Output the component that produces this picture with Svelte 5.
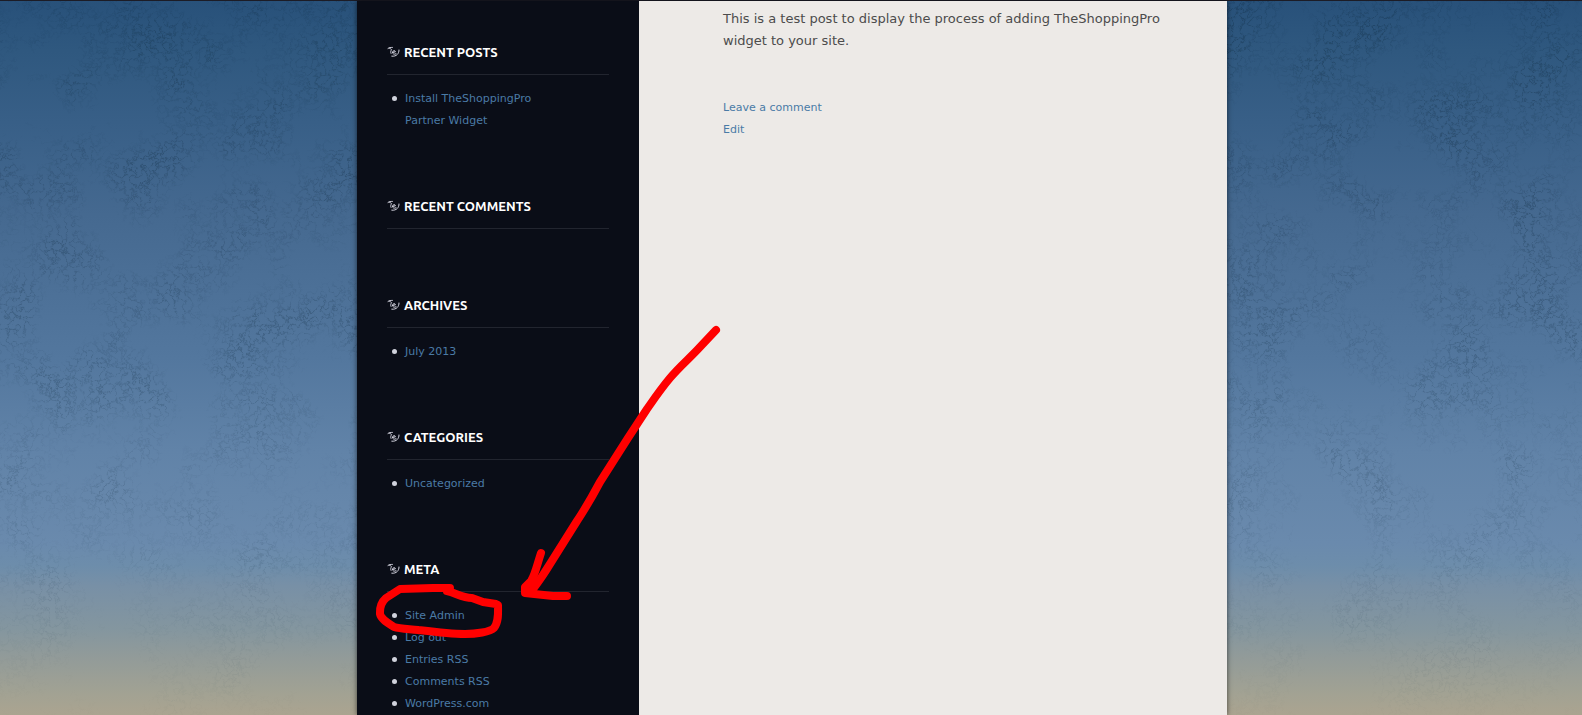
<script>
  const sections = [
    { title: 'Recent Posts', links: ['Install TheShoppingPro Partner Widget'] },
    { title: 'Recent Comments', links: [] },
    { title: 'Archives', links: ['July 2013'] },
    { title: 'Categories', links: ['Uncategorized'] },
    { title: 'Meta', links: ['Site Admin', 'Log out', 'Entries RSS', 'Comments RSS', 'WordPress.com'] }
  ];
</script>

<div class="page">
  <svg class="texture" aria-hidden="true">
    <defs>
      <filter id="grunge" x="0" y="0" width="100%" height="100%" color-interpolation-filters="sRGB">
        <feTurbulence type="fractalNoise" baseFrequency="0.12" numOctaves="5" seed="8" result="fine" />
        <feColorMatrix in="fine" type="matrix" values="0 0 0 0 0.06  0 0 0 0 0.16  0 0 0 0 0.24  1 0 0 0 0" result="field" />
        <feComponentTransfer in="field" result="cracks">
          <feFuncA type="table" tableValues="0 0 0 0 0 0 0 0 0 0.2 1 0.2 0 0 0 0 0 0 0 0 0" />
        </feComponentTransfer>
        <feTurbulence type="fractalNoise" baseFrequency="0.014" numOctaves="5" seed="21" result="coarse" />
        <feColorMatrix in="coarse" type="matrix" values="0 0 0 0 0  0 0 0 0 0  0 0 0 0 0  0 3 0 0 -1.2" result="patches" />
        <feComposite in="cracks" in2="patches" operator="in" />
      </filter>
      <linearGradient id="fade" x1="0" y1="0" x2="0" y2="1">
        <stop offset="0" stop-color="#fff" />
        <stop offset="0.6" stop-color="#aaa" />
        <stop offset="0.85" stop-color="#444" />
        <stop offset="1" stop-color="#111" />
      </linearGradient>
      <mask id="fade-mask"><rect width="100%" height="100%" fill="url(#fade)" /></mask>
    </defs>
    <g mask="url(#fade-mask)"><rect width="100%" height="100%" filter="url(#grunge)" opacity="0.32" /></g>
  </svg>

  <div class="wrapper">
    <aside>
      {#each sections as section}
        <section>
          <h2>
            <svg viewBox="0 0 13 12" width="13" height="12" aria-hidden="true">
              <path d="M1 2.5 C2.4 1.6 3.6 1.4 5.4 1.4 M2.2 2 C3 2.6 4.2 3 4.6 3.6 C3.8 4.8 3.4 6 4 7.4 M5.4 6.6 L8.4 5.8 C8.2 4.2 6 4.2 5.6 6 C5.3 8 7.2 8.8 9 7.8 M12 4 C12.2 7.4 9.6 10.8 4.8 10.2" />
            </svg>
            {section.title}
          </h2>
          {#if section.links.length}
            <ul>
              {#each section.links as link}
                <li><a href="#top">{link}</a></li>
              {/each}
            </ul>
          {/if}
        </section>
      {/each}
    </aside>

    <main>
      <p>This is a test post to display the process of adding TheShoppingPro widget to your site.</p>
      <footer>
        <a href="#comment">Leave a comment</a>
        <a href="#edit">Edit</a>
      </footer>
    </main>

    <svg class="marks" viewBox="357 0 870 715" width="870" height="715" aria-hidden="true">
      <path d="M716 330 L700 347 C690 358 680 366 670 378 C660 390 654 399 647 409 L628 438 L600 482 C592 497 585 509 577 521 L550 564 C544 574 539 581 533 589" />
      <path d="M541 553 C537 565 535 575 531 581 L525 587 L525 593 L553 596 L567 596" />
      <path d="M450 588 L433 588 L400 589 L386 598 C379 604 380 611 380 614 C381 619 388 623 394 627 C400 629 410 629 418 630 C434 632 449 634 465 634 C476 634 490 632 494 628 C499 622 498 612 498 605 L496 604 L483 602 L472 598 C462 598 456 593 447 591" />
    </svg>
  </div>
</div>

<style>
  :global(body) {
    margin: 0;
    background: #aca592;
  }

  .page {
    position: relative;
    box-sizing: border-box;
    min-height: 100vh;
    display: flex;
    justify-content: center;
    padding-left: 2px;
    border-top: 1px solid #1c1c26;
    background: linear-gradient(
      #28517a 0%,
      #2f587f 7%,
      #385f87 17%,
      #456990 30%,
      #53779e 50%,
      #6183a8 63%,
      #6a8aad 76%,
      #6d8dab 79%,
      #7890a6 82%,
      #84969f 88%,
      #929b99 92%,
      #a2a293 97%,
      #aba490 100%
    );
    font-family: Verdana, 'DejaVu Sans', sans-serif;
    font-size: 11px;
    line-height: 22px;
  }

  .texture {
    position: absolute;
    inset: 0;
    width: 100%;
    height: 100%;
  }

  .wrapper {
    position: relative;
    display: flex;
    width: 100%;
    max-width: 870px;
    background: #edeae7;
    box-shadow: 0 0 5px rgba(0, 0, 0, 0.6);
  }

  aside {
    box-sizing: border-box;
    flex: 0 0 282px;
    display: flex;
    flex-direction: column;
    gap: 52px;
    padding: 40px 30px 0;
    background: #0a0d17;
  }

  section {
    display: flow-root;
  }

  h2 {
    display: flex;
    align-items: center;
    gap: 4px;
    margin: 0 0 13px;
    padding-bottom: 11px;
    border-bottom: 1px solid #22252f;
    color: #fff;
    font-family: Ubuntu, 'Noto Sans', sans-serif;
    font-size: 13px;
    font-weight: 700;
    line-height: 22px;
    text-transform: uppercase;
  }

  h2 svg {
    flex: none;
    fill: none;
    stroke: #d4d4e0;
    stroke-linecap: round;
  }

  ul {
    margin: 0 0 11px;
    padding: 0;
    list-style: none;
  }

  section:last-child ul {
    margin-bottom: 0;
  }

  li {
    display: flex;
    padding-right: 50px;
  }

  li::before {
    content: '';
    flex: none;
    width: 5px;
    height: 5px;
    margin: 8px 8px 0 5px;
    border-radius: 50%;
    background: #d0d2dc;
  }

  a {
    color: #4a7ba6;
    text-decoration: none;
  }

  main {
    flex: 1;
    padding: 7px 50px 0 84px;
  }

  p {
    margin: 0 0 45px;
    color: #4c4c4c;
    font-size: 13px;
  }

  footer {
    display: flex;
    flex-direction: column;
    align-items: flex-start;
  }

  .marks {
    position: absolute;
    top: -1px;
    left: 0;
    pointer-events: none;
    fill: none;
    stroke: #f00;
    stroke-width: 8px;
    stroke-linecap: round;
    stroke-linejoin: round;
  }
</style>
